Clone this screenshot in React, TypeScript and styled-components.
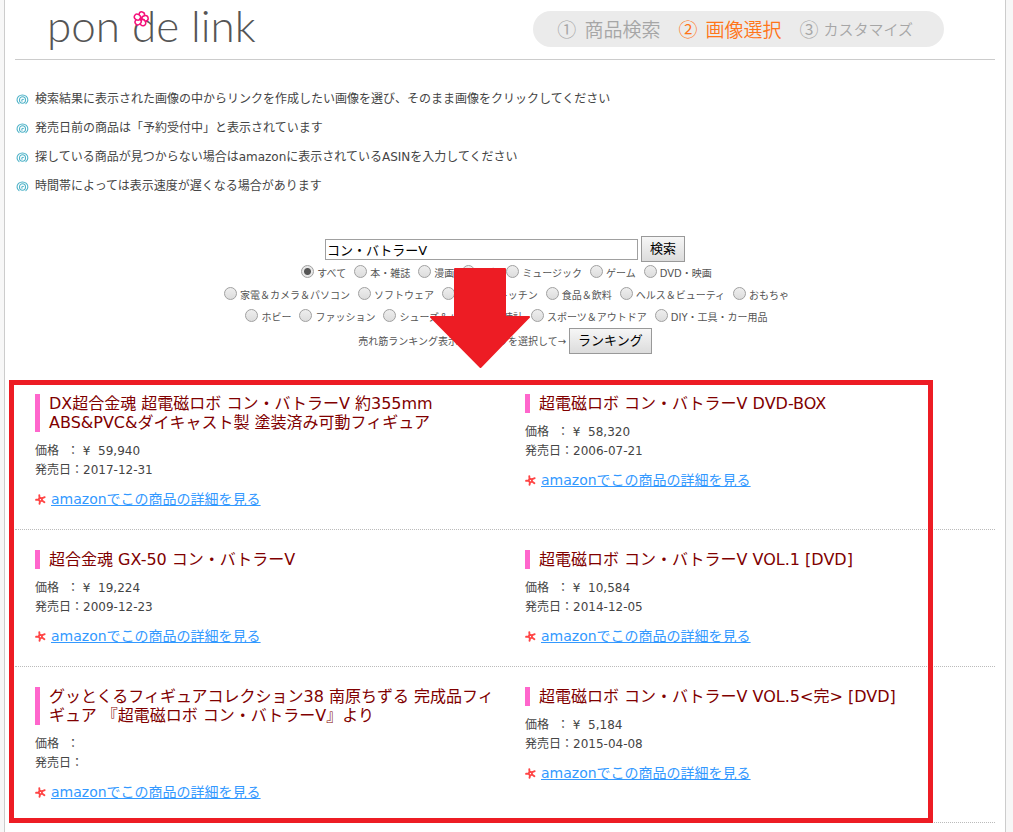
import React from "react";
import styled, { createGlobalStyle } from "styled-components";

const Global = createGlobalStyle`
  * { box-sizing: border-box; }
  body {
    margin: 0;
    background: #f7f7f7;
    color: #444;
    font: 12px/19px "DejaVu Sans", "Noto Sans CJK JP", sans-serif;
  }
`;

const Page = styled.div`
  min-height: 100vh;
  margin: 0 7px 0 4px;
  padding: 0 10px;
  background: #fff;
  border: solid #ccc;
  border-width: 0 1px;
`;

const Header = styled.header`
  display: flex;
  justify-content: space-between;
  align-items: flex-start;
  height: 60px;
  padding: 0 51px 0 32px;
  border-bottom: 1px solid #ccc;
`;

const Logo = styled.h1`
  position: relative;
  margin: 0;
  color: #555;
  font: 300 44px/50px Lato, sans-serif;
  white-space: nowrap;
`;

const Flower = styled.svg`
  position: absolute;
  left: 86px;
  top: 11px;
  width: 16px;
  height: 16px;
`;

const Steps = styled.ol`
  display: flex;
  align-items: center;
  gap: 18px;
  height: 36px;
  margin: 11px 0 0;
  padding: 0 31px 0 24px;
  border-radius: 18px;
  background: #ebebeb;
  list-style: none;
  white-space: nowrap;
`;

const Step = styled.li<{ $current?: boolean; $kana?: boolean }>`
  display: flex;
  align-items: center;
  gap: ${(p) => (p.$kana ? 5 : 8)}px;
  color: ${(p) => (p.$current ? "#ff7519" : "#a6a6a6")};
  font: 350 ${(p) => (p.$kana ? 15 : 19)}px/36px "Noto Sans CJK JP", sans-serif;
`;

const StepNumber = styled.span`
  font-size: 19px;
`;

const Notes = styled.ul`
  margin: 25px 0 35px;
  padding: 0;
  list-style: none;
`;

const Note = styled.li`
  display: flex;
  align-items: center;
  gap: 6px;
  padding-left: 1px;
  line-height: 29px;
`;

const SearchForm = styled.form`
  position: relative;
  display: flex;
  flex-direction: column;
  align-items: center;
  margin-bottom: 20px;
  font-size: 10px;
`;

const SearchRow = styled.div`
  display: flex;
  align-items: center;
  gap: 3px;
  height: 26px;
  color: #555;
`;

const Keyword = styled.input`
  width: 313px;
  height: 21px;
  padding: 0 1px;
  border: 1px solid #a0a0a0;
  background: #fff;
  color: #000;
  font: 13px "DejaVu Sans", "Noto Sans CJK JP", sans-serif;
`;

const Button = styled.button`
  height: 26px;
  padding: 0 8px;
  border: 1px solid #999;
  background: linear-gradient(#f6f6f6, #dcdcdc);
  color: #000;
  font: 13px/22px "DejaVu Sans", "Noto Sans CJK JP", sans-serif;
`;

const RadioRow = styled.div`
  display: flex;
  gap: 3px;
  height: 22px;
  padding-right: 2px;
  white-space: nowrap;
`;

const RadioLabel = styled.label`
  display: flex;
  align-items: flex-start;
  color: #555;
  line-height: 24px;
`;

const Radio = styled.input`
  appearance: none;
  width: 13px;
  height: 13px;
  margin: 3px 3px 0 5px;
  border: 1px solid #a0a0a0;
  border-radius: 50%;
  background: linear-gradient(#eee, #ddd);
  &:checked {
    background: radial-gradient(circle, #555 0 3px, #e8e8e8 4px);
  }
`;

const Arrow = styled.svg`
  position: absolute;
  left: calc(50% - 75px);
  top: 32px;
  width: 100px;
  height: 101px;
  pointer-events: none;
`;

const Results = styled.main`
  position: relative;
`;

const Highlight = styled.div`
  position: absolute;
  inset: 6px 62px 0 -6px;
  border: 5px solid #ed1c24;
  pointer-events: none;
`;

const ResultRow = styled.div`
  display: grid;
  grid-template-columns: 1fr 1fr;
  border-bottom: 1px dotted #bbb;
`;

const Product = styled.article`
  padding: 20px 0 20px 20px;
`;

const Title = styled.h2`
  margin: 0 0 10px;
  padding: 0 4px 0 9px;
  border-left: 5px solid #f6c;
  color: #800000;
  font-size: 16px;
  font-weight: 400;
  line-height: 19px;
`;

const Detail = styled.div`
  display: flex;
  white-space: pre;
`;

const DetailName = styled.span`
  min-width: 32px;
`;

const More = styled.div`
  display: flex;
  align-items: center;
  gap: 5px;
  margin-top: 9px;
  font-size: 14px;
  line-height: 20px;
`;

const MoreLink = styled.a`
  color: #39f;
  text-decoration: underline;
`;

const Swirl = () => (
  <svg width="13" height="14" viewBox="0 0 13 14" fill="none" stroke="#4fb3c8" strokeWidth="1.1" strokeLinecap="round" aria-hidden="true">
    <path d="M3 10.600A5.400 4.900 0 1 1 9.900 10.600" />
    <ellipse cx="6.500" cy="7" rx="3" ry="3.200" />
    <path d="M6 8.200C5.400 7 6.400 6 7.400 6.400" />
  </svg>
);

const Star = () => (
  <svg width="11" height="11" viewBox="0 0 11 11" fill="none" stroke="#ff4545" strokeWidth="1.900" strokeLinecap="round" aria-hidden="true">
    <path d="M4.500 3.800L4.300 1.200M6.800 4.300L9.700 3.200M7 6.500L9.400 8.300M5 7.500L4.500 9.800M3.600 5.600L1.100 5.800M4.500 3.800L6.800 4.300L7 6.500L5 7.500L3.600 5.600Z" />
  </svg>
);

const radioRows = [
  ["すべて", "本・雑誌", "漫画", "洋書", "ミュージック", "ゲーム", "DVD・映画"],
  ["家電＆カメラ＆パソコン", "ソフトウェア", "ホーム＆キッチン", "食品＆飲料", "ヘルス＆ビューティ", "おもちゃ"],
  ["ホビー", "ファッション", "シューズ＆バッグ", "時計", "スポーツ＆アウトドア", "DIY・工具・カー用品"],
];

const notes = [
  "検索結果に表示された画像の中からリンクを作成したい画像を選び、そのまま画像をクリックしてください",
  "発売日前の商品は「予約受付中」と表示されています",
  "探している商品が見つからない場合はamazonに表示されているASINを入力してください",
  "時間帯によっては表示速度が遅くなる場合があります",
];

type Item = { title: string; price: string; date: string };

const rows: Item[][] = [
  [
    { title: "DX超合金魂 超電磁ロボ コン・バトラーV 約355mm ABS&PVC&ダイキャスト製 塗装済み可動フィギュア", price: "¥  59,940", date: "2017-12-31" },
    { title: "超電磁ロボ コン・バトラーV DVD-BOX", price: "¥  58,320", date: "2006-07-21" },
  ],
  [
    { title: "超合金魂 GX-50 コン・バトラーV", price: "¥  19,224", date: "2009-12-23" },
    { title: "超電磁ロボ コン・バトラーV VOL.1 [DVD]", price: "¥  10,584", date: "2014-12-05" },
  ],
  [
    { title: "グッとくるフィギュアコレクション38 南原ちずる 完成品フィギュア 『超電磁ロボ コン・バトラーV』より", price: "", date: "" },
    { title: "超電磁ロボ コン・バトラーV VOL.5<完> [DVD]", price: "¥  5,184", date: "2015-04-08" },
  ],
];

export default function App() {
  return (
    <>
      <Global />
      <Page>
        <Header>
          <Logo>
            pon de link
            <Flower viewBox="0 0 16 16" fill="#fff" stroke="#f5107a" strokeWidth="1.500" aria-hidden="true">
              {[0, 72, 144, 216, 288].map((a) => (
                <ellipse key={a} cx="8" cy="4" rx="2.800" ry="3.200" transform={`rotate(${a + 10} 8 8)`} />
              ))}
              <circle cx="8" cy="8" r="1" fill="#f5107a" />
            </Flower>
          </Logo>
          <Steps>
            <Step><StepNumber>①</StepNumber>商品検索</Step>
            <Step $current><StepNumber>②</StepNumber>画像選択</Step>
            <Step $kana><StepNumber>③</StepNumber>カスタマイズ</Step>
          </Steps>
        </Header>
        <Notes>
          {notes.map((n) => (
            <Note key={n}><Swirl />{n}</Note>
          ))}
        </Notes>
        <SearchForm onSubmit={(e) => e.preventDefault()}>
          <SearchRow>
            <Keyword type="text" aria-label="キーワード" defaultValue="コン・バトラーV" />
            <Button type="submit">検索</Button>
          </SearchRow>
          {radioRows.map((r) => (
            <RadioRow key={r[0]}>
              {r.map((name) => (
                <RadioLabel key={name}>
                  <Radio type="radio" name="category" value={name} defaultChecked={name === "すべて"} />
                  {name}
                </RadioLabel>
              ))}
            </RadioRow>
          ))}
          <SearchRow>
            <span>売れ筋ランキング表示はカテゴリを選択して→</span>
            <Button type="button">ランキング</Button>
          </SearchRow>
          <Arrow viewBox="0 0 100 101" fill="#ed1c24" stroke="#ed1c24" strokeWidth="2" strokeLinejoin="round" aria-hidden="true">
            <path d="M25 1H75V49H99L50.500 99L1 49H25Z" />
          </Arrow>
        </SearchForm>
        <Results>
          {rows.map((r, i) => (
            <ResultRow key={i}>
              {r.map((p) => (
                <Product key={p.title}>
                  <Title>{p.title}</Title>
                  <Detail><DetailName>価格</DetailName>： {p.price}</Detail>
                  <Detail>発売日：{p.date}</Detail>
                  <More><Star /><MoreLink href="#">amazonでこの商品の詳細を見る</MoreLink></More>
                </Product>
              ))}
            </ResultRow>
          ))}
          <Highlight />
        </Results>
      </Page>
    </>
  );
}
